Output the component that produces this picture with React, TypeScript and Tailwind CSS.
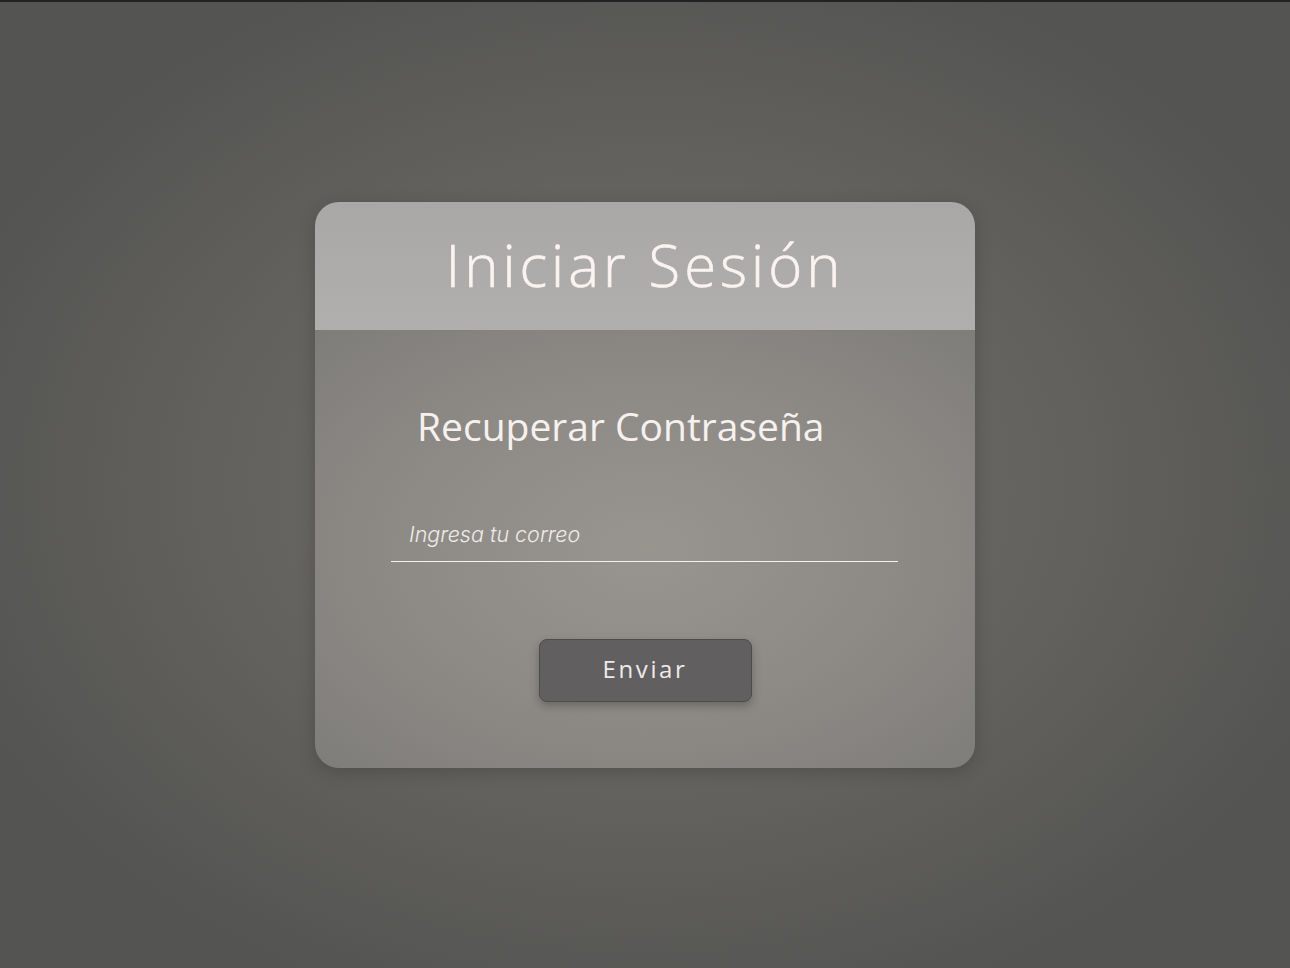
import React, { useState } from 'react';

export default function App() {
  const [email, setEmail] = useState('');

  return (
    <div className="min-h-screen w-full border-t-2 border-[#222222] bg-[radial-gradient(ellipse_at_center,#6e6d6a_0%,#63625f_45%,#545452_80%)] flex items-start justify-center font-['Open_Sans',sans-serif]">
      <div className="mt-[200px] w-[660px] h-[566px] rounded-[24px] overflow-hidden shadow-[0_4px_18px_rgba(0,0,0,0.18)] flex flex-col">
        <div className="h-[128px] bg-[linear-gradient(180deg,#a9a8a6,#b0afad)] flex items-center justify-center">
          <h1 className="text-[58px] font-light tracking-[4px] text-[#fbf3f2] leading-none pb-[2px] [-webkit-text-stroke:0.6px_#fbf3f2]">Iniciar Sesión</h1>
        </div>
        <div className="flex-1 bg-[radial-gradient(ellipse_at_center,#98958f_0%,#8e8b87_50%,#7f7d7a_100%)] flex flex-col">
          <h2 className="ml-[102px] mt-[76px] text-[39px] font-normal text-[#f6f1ef] leading-none">Recuperar Contraseña</h2>
          <div className="ml-[76px] mt-[73px] w-[507px] border-b-[1.5px] border-[#f4f2f0]">
            <input
              type="email"
              value={email}
              onChange={(e) => setEmail(e.target.value)}
              placeholder="Ingresa tu correo"
              className="w-full bg-transparent px-[18px] pb-[11px] text-[21.5px] italic font-light font-['Inter',sans-serif] text-[#f4f0ee] placeholder:text-[#efebe9] outline-none"
            />
          </div>
          <div className="flex justify-center mt-[77px]">
            <button className="w-[213px] h-[63px] rounded-[8px] bg-[#615f5f] border border-[#4d4b4b] shadow-[0_4px_10px_rgba(0,0,0,0.25)] text-[24px] tracking-[2.6px] text-[#eeeaea] font-['Open_Sans',sans-serif] pb-[4px]">
              Enviar
            </button>
          </div>
        </div>
      </div>
    </div>
  );
}
